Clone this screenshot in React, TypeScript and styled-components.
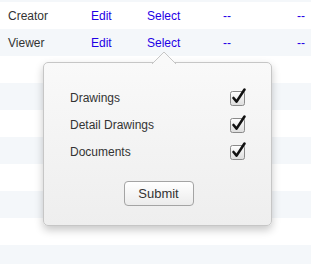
import styled, { createGlobalStyle } from 'styled-components';

const GlobalStyle = createGlobalStyle`
  html, body {
    margin: 0;
    padding: 0;
    background: #ffffff;
    overflow: hidden;
  }
  body {
    font-family: "Liberation Sans", Arial, sans-serif;
  }
`;

const Page = styled.div`
  position: relative;
  width: 311px;
  height: 264px;
  overflow: hidden;
`;

const Table = styled.div`
  margin-top: -25px;
  display: flex;
  flex-direction: column;
`;

const Row = styled.div<{ $striped: boolean }>`
  display: grid;
  grid-template-columns: 83px 56px 76px 74px 1fr;
  align-items: center;
  height: 27px;
  padding-left: 8px;
  font-size: 12px;
  background: ${props => (props.$striped ? '#f4f7fa' : '#ffffff')};
`;

const RoleCell = styled.span`
  color: #333333;
`;

const LinkCell = styled.span`
  color: #1f00e6;
`;

const Popover = styled.div`
  position: absolute;
  left: 43px;
  top: 62px;
  width: 229px;
  height: 164px;
  box-sizing: border-box;
  border: 1px solid #c6c6c6;
  border-radius: 5px;
  background: linear-gradient(#f9f9f9, #eeeeee);
  box-shadow: 0 4px 9px rgba(0, 0, 0, 0.22);
  padding: 21px 26px 19px 26px;
  display: flex;
  flex-direction: column;
`;

const Arrow = styled.svg`
  position: absolute;
  left: 108px;
  top: -12px;
`;

const Options = styled.div`
  display: flex;
  flex-direction: column;
`;

const OptionRow = styled.label`
  display: flex;
  align-items: center;
  justify-content: space-between;
  height: 27px;
  font-size: 12px;
  color: #333333;
`;

const Check = styled.svg`
  margin-right: -2px;
  margin-top: -3px;
`;

const Footer = styled.div`
  margin-top: auto;
  display: flex;
  justify-content: center;
`;

const SubmitButton = styled.button`
  width: 70px;
  height: 25px;
  margin-left: 2px;
  border: 1px solid #a4a4a4;
  border-radius: 4px;
  background: linear-gradient(#ffffff, #ececec);
  font-family: "Liberation Sans", Arial, sans-serif;
  font-size: 13px;
  color: #333333;
  padding: 0;
`;

const rows: { role: string }[] = [
  { role: '' },
  { role: 'Creator' },
  { role: 'Viewer' },
  { role: '' },
  { role: '' },
  { role: '' },
  { role: '' },
  { role: '' },
  { role: '' },
  { role: '' },
  { role: '' },
];

const options = ['Drawings', 'Detail Drawings', 'Documents'];

const CheckIcon = () => (
  <Check width="18" height="19" viewBox="0 0 18 19">
    <defs>
      <linearGradient id="cbg" x1="0" y1="0" x2="0" y2="1">
        <stop offset="0" stopColor="#ffffff" />
        <stop offset="1" stopColor="#dcdcdc" />
      </linearGradient>
    </defs>
    <rect x="1.5" y="4.5" width="14" height="14" rx="2" fill="url(#cbg)" stroke="#8a8a8a" />
    <path d="M4.5 11 L7.6 14.6 L15.5 2.5" fill="none" stroke="#111111" strokeWidth="2.6" strokeLinecap="round" strokeLinejoin="round" />
  </Check>
);

const App = () => (
  <Page>
    <GlobalStyle />
    <Table>
      {rows.map((row, i) => (
        <Row key={i} $striped={i % 2 === 0}>
          {row.role ? (
            <>
              <RoleCell>{row.role}</RoleCell>
              <LinkCell>Edit</LinkCell>
              <LinkCell>Select</LinkCell>
              <LinkCell>--</LinkCell>
              <LinkCell>--</LinkCell>
            </>
          ) : null}
        </Row>
      ))}
    </Table>
    <Popover>
      <Arrow width="24" height="13" viewBox="0 0 24 13">
        <path d="M0 13 L12 1 L24 13" fill="#f9f9f9" stroke="#c6c6c6" strokeWidth="1" />
      </Arrow>
      <Options>
        {options.map(label => (
          <OptionRow key={label}>
            <span>{label}</span>
            <CheckIcon />
          </OptionRow>
        ))}
      </Options>
      <Footer>
        <SubmitButton>Submit</SubmitButton>
      </Footer>
    </Popover>
  </Page>
);

export default App;
